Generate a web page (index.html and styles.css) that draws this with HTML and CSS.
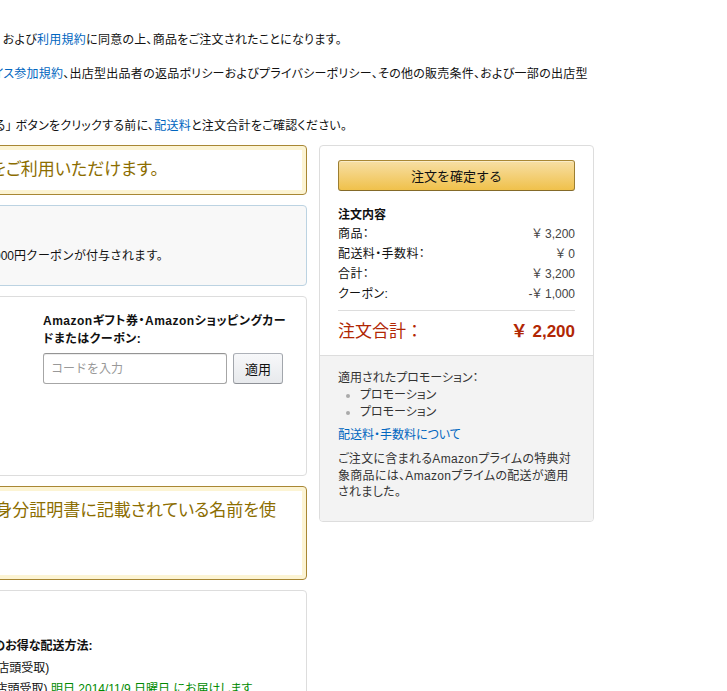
FILE: index.html
```html
<!DOCTYPE html>
<html lang="ja">
<head>
    <meta charset="UTF-8">
    <meta name="viewport" content="width=device-width, initial-scale=1.0">
    <title>注文の確定</title>
    <link rel="stylesheet" href="styles.css">
</head>
<body>
    <div class="page">
        <div class="terms">
            <p>個人情報規約　および<a href="#">利用規約</a>に同意の上、商品をご注文されたことになります。</p>
            <p><a href="#">マーケットプレイス参加規約</a>、出店型出品者の返品ポリシーおよびプライバシーポリシー、その他の販売条件、および一部の出店型出品者の条件。</p>
            <p>「注文を確定する」 ボタンをクリックする前に、<a href="#">配送料</a>と注文合計をご確認ください。</p>
        </div>

        <div class="checkout">
            <div class="main-col">
                <div class="box alert-warning first-alert">
                    <p class="alert-text">ギフト券をご利用いただけます。</p>
                </div>

                <div class="box alert-info">
                    <p class="info-title">特典</p>
                    <p class="info-text">ご購入で1,000円クーポンが付与されます。</p>
                </div>

                <div class="box payment-box">
                    <div class="payment-methods">
                        <h3>支払方法</h3>
                    </div>
                    <div class="gift-code">
                        <label for="claimCode">Amazonギフト券・Amazonショッピングカードまたはクーポン:</label>
                        <div class="code-row">
                            <input type="text" id="claimCode" placeholder="コードを入力">
                            <button type="button" class="btn-apply">適用</button>
                        </div>
                    </div>
                </div>

                <div class="box alert-warning name-alert">
                    <p class="alert-text">ご本人の身分証明書に記載されている名前を使用。</p>
                </div>

                <div class="box shipping-box">
                    <p class="ship-title">配送</p>
                    <p class="ship-heading">Prime会員のお得な配送方法:</p>
                    <p class="ship-option">通常配送 (店頭受取)</p>
                    <p class="ship-option">お急ぎ便 (店頭受取) <span class="arrive">明日 2014/11/9 日曜日 にお届けします</span></p>
                </div>
            </div>

            <div class="side-col">
                <div class="summary">
                    <div class="summary-main">
                        <button type="button" class="place-order">注文を確定する</button>
                        <h3 class="summary-title">注文内容</h3>
                        <div class="row"><span>商品：</span><span class="price">￥ 3,200</span></div>
                        <div class="row"><span>配送料・手数料：</span><span class="price">￥ 0</span></div>
                        <div class="row"><span>合計：</span><span class="price">￥ 3,200</span></div>
                        <div class="row"><span>クーポン:</span><span class="price">-￥ 1,000</span></div>
                        <div class="total-row"><span>注文合計：</span><span class="total-price">￥ 2,200</span></div>
                    </div>
                    <div class="summary-notes">
                        <p>適用されたプロモーション：</p>
                        <ul class="promo-list">
                            <li>プロモーション</li>
                            <li>プロモーション</li>
                        </ul>
                        <a href="#" class="fee-link">配送料・手数料について</a>
                        <p class="prime-note">ご注文に含まれるAmazonプライムの特典対象商品には、Amazonプライムの配送が適用されました。</p>
                    </div>
                </div>
            </div>
        </div>
    </div>
</body>
</html>
```

FILE: styles.css
```css
* {
    box-sizing: border-box;
}

html, body {
    margin: 0;
    padding: 0;
    overflow: hidden;
}

body {
    font-family: Arial, "Liberation Sans", "Noto Sans CJK JP", sans-serif;
    font-size: 12px;
    line-height: 17px;
    color: #111;
    background-color: #fff;
    font-feature-settings: "palt";
}

a {
    color: #0066c0;
    text-decoration: none;
}

p {
    margin: 0;
}

h3 {
    margin: 0;
    font-size: 12px;
}

/* page is scrolled sideways, left edge is off screen */
.page {
    width: 677px;
    margin-left: -83px;
    padding-top: 32px;
}

.terms {
    letter-spacing: 0.25px;
}

.terms p {
    margin-bottom: 17px;
}

.terms p:nth-child(2) {
    margin-bottom: 18px;
}

.terms p:last-child {
    margin-bottom: 10px;
}

.checkout {
    display: flex;
    gap: 12px;
    align-items: flex-start;
}

.main-col {
    width: 390px;
}

.side-col {
    width: 275px;
}

.box {
    border: 1px solid #ddd;
    border-radius: 4px;
    margin-bottom: 10px;
    padding: 14px 18px;
}

.alert-warning {
    border-color: #a88734;
    box-shadow: inset 0 0 0 4px #fcf4d4;
    color: #8c6d00;
    padding-left: 12px;
}

.alert-text {
    font-size: 17px;
    line-height: 24px;
}

.first-alert {
    height: 50px;
    padding-top: 12px;
}

.name-alert {
    height: 94px;
    padding-top: 12px;
}

.alert-info {
    height: 81px;
    background-color: #f8f8f8;
    border-color: #bcd3e2;
    padding-top: 15px;
}

.info-title {
    margin-bottom: 10px;
    font-weight: bold;
}

.info-text {
    font-feature-settings: normal;
}

.payment-box {
    display: flex;
    gap: 20px;
    height: 180px;
    padding-top: 15px;
}

.payment-methods {
    width: 87px;
}

.gift-code {
    flex: 1;
}

.gift-code label {
    display: block;
    font-weight: bold;
    line-height: 18px;
    letter-spacing: 0.5px;
    margin-bottom: 5px;
}

.code-row {
    display: flex;
    gap: 6px;
}

.code-row input[type="text"] {
    width: 184px;
    height: 31px;
    padding: 3px 7px;
    border: 1px solid #a6a6a6;
    border-top-color: #949494;
    border-radius: 3px;
    box-shadow: 0 1px 0 rgba(0, 0, 0, 0.07) inset;
    font-family: inherit;
    font-size: 12px;
}

.code-row input::placeholder {
    color: #999;
}

.btn-apply {
    width: 50px;
    height: 31px;
    border: 1px solid #adb1b8;
    border-color: #adb1b8 #a2a6ac #8d9096;
    border-radius: 3px;
    background: linear-gradient(to bottom, #f7f8fa, #e7e9ec);
    font-family: inherit;
    font-size: 13px;
    color: #111;
    cursor: pointer;
}

.shipping-box {
    height: 120px;
}

.ship-title {
    font-weight: bold;
}

.ship-heading {
    font-weight: bold;
    margin-top: 16px;
    margin-bottom: 3px;
}

.ship-option {
    padding-left: 6px;
    line-height: 21px;
}

.arrive {
    color: #008a00;
}

.summary {
    border: 1px solid #ddd;
    border-radius: 4px;
    overflow: hidden;
}

.summary-main {
    padding: 14px 18px 11px;
}

.place-order {
    display: block;
    width: 100%;
    height: 31px;
    border: 1px solid #a88734;
    border-color: #a88734 #9c7e31 #846a29;
    border-radius: 3px;
    background: linear-gradient(to bottom, #f7dfa5, #f0c14b);
    box-shadow: inset 0 1px 0 rgba(255, 255, 255, 0.4);
    font-family: inherit;
    font-size: 13px;
    color: #111;
    cursor: pointer;
}

.summary-title {
    margin-top: 15px;
    line-height: 18px;
}

.row {
    display: flex;
    justify-content: space-between;
    line-height: 20px;
}

.row span:first-child {
    letter-spacing: 0.4px;
}

.price {
    color: #444;
}

.total-row {
    display: flex;
    justify-content: space-between;
    margin-top: 6px;
    padding-top: 9px;
    border-top: 1px solid #ddd;
    font-size: 17px;
    line-height: 24px;
    color: #b12704;
    font-feature-settings: normal;
}

.total-price {
    font-weight: bold;
}

.summary-notes {
    background-color: #f3f3f3;
    border-top: 1px solid #ddd;
    padding: 14px 18px 20px;
    color: #333;
}

.promo-list {
    margin: 0;
    padding-left: 22px;
}

.promo-list li::marker {
    color: #aaa;
}

.fee-link {
    display: block;
    margin-top: 6px;
    margin-bottom: 7px;
}

.prime-note {
    line-height: 16.5px;
    letter-spacing: 0.3px;
}
```
